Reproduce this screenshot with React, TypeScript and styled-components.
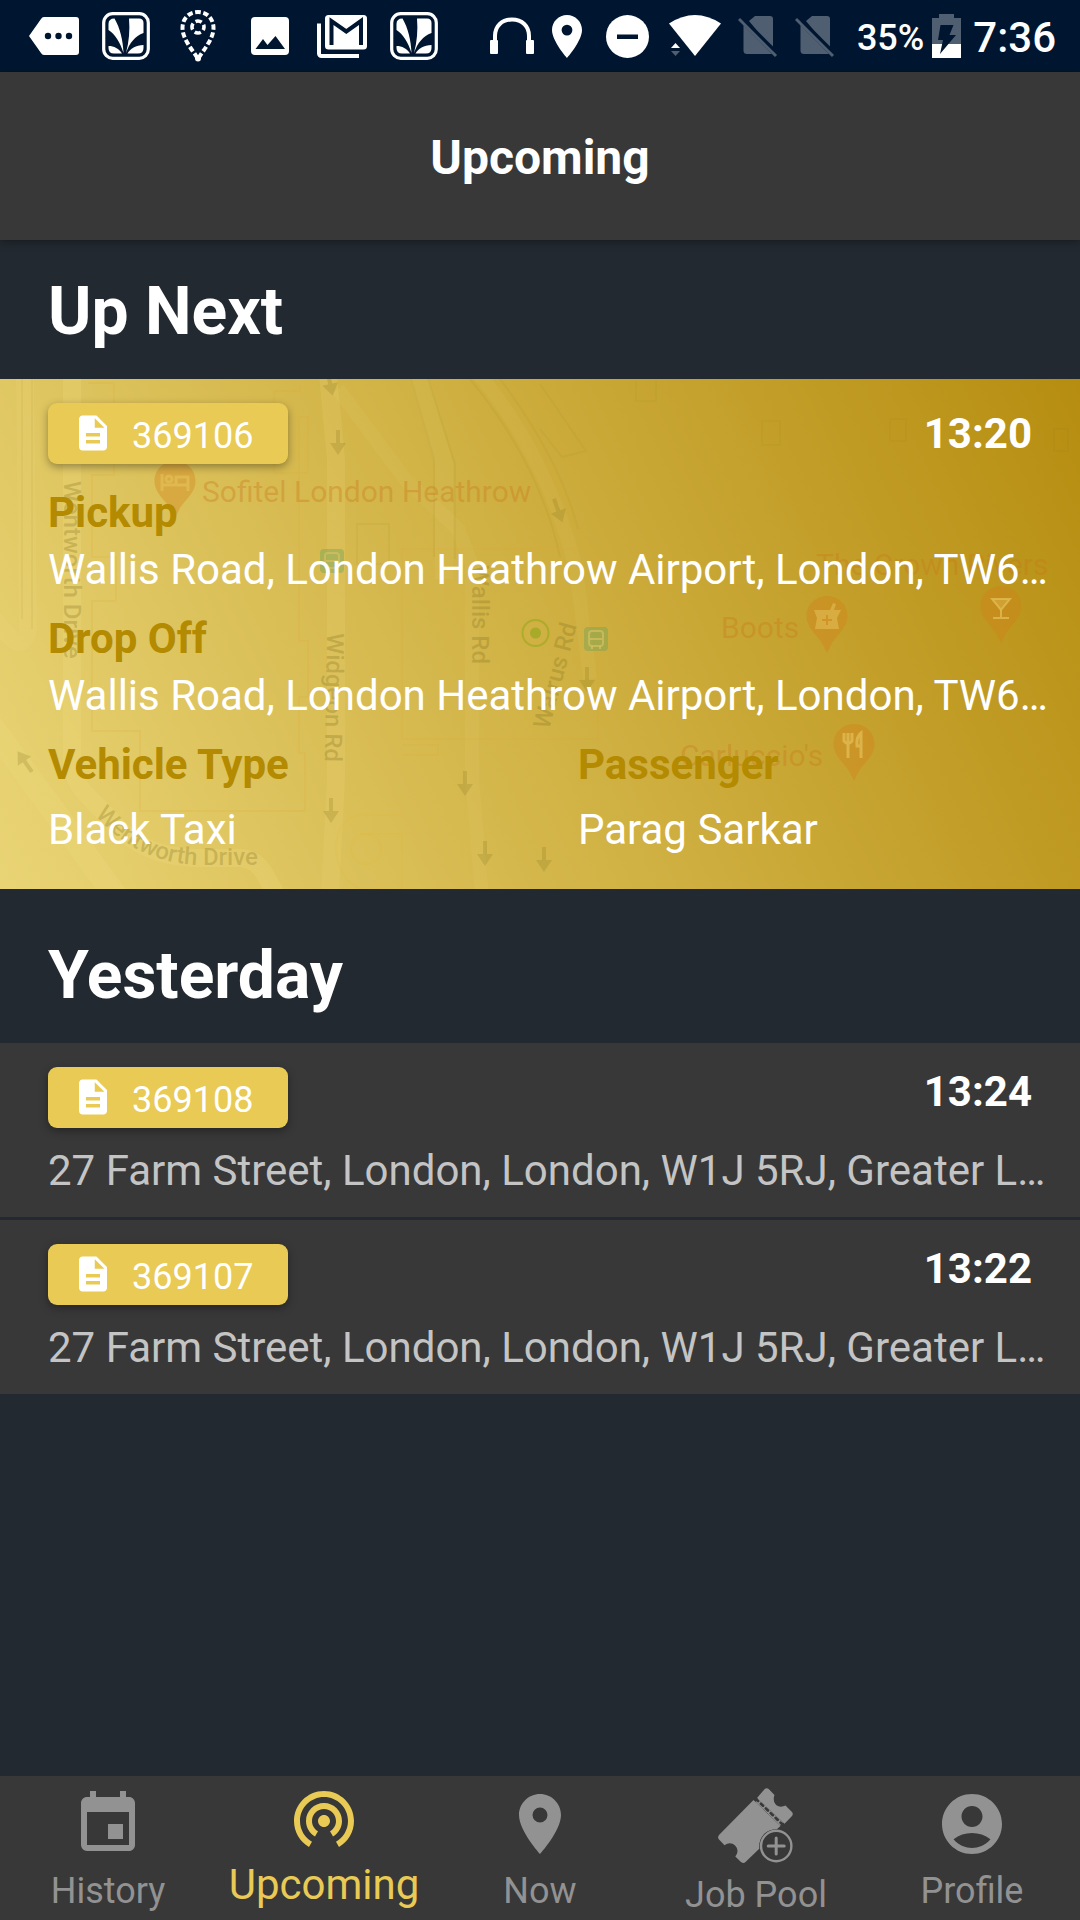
import React from 'react';
import styled, { createGlobalStyle } from 'styled-components';
import {
  MdAccountCircle,
  MdDescription,
  MdEvent,
  MdPlace,
  MdWifiTethering,
} from 'react-icons/md';

const color = {
  status: '#001630',
  page: '#222930',
  panel: '#383838',
  accent: '#e8ca54',
  label: '#b38a00',
  muted: '#c4c4c4',
  tab: '#929292',
  dim: '#4f5e70',
};

const GlobalStyle = createGlobalStyle`
  *, *::before, *::after { box-sizing: border-box; }
  body {
    margin: 0;
    background: ${color.page};
    color: #fff;
    font-family: Roboto, "Noto Sans", sans-serif;
  }
  h1, h2, p, dl, dt, dd, ul { margin: 0; padding: 0; }
  button { font: inherit; border: 0; cursor: pointer; }
`;

const Screen = styled.div`
  display: flex;
  flex-direction: column;
  min-height: 100vh;
  background: ${color.page};
`;

/* ---------- status bar ---------- */

const StatusBar = styled.div`
  display: flex;
  justify-content: space-between;
  align-items: center;
  height: 72px;
  padding: 0 24px 0 18px;
  background: ${color.status};
`;

const StatusGroup = styled.div`
  display: flex;
  align-items: center;
`;

const StatusCell = styled.span<{ $width: number }>`
  display: flex;
  justify-content: center;
  align-items: center;
  width: ${(p) => p.$width}px;
  height: 72px;

  svg { display: block; flex: none; }
`;

const BatteryText = styled.span`
  padding-top: 4px;
  margin-left: 15px;
  font-size: 36px;
  line-height: 42px;
  font-weight: 500;
`;

const Clock = styled.span`
  padding-top: 4px;
  margin-left: 4px;
  font-size: 42px;
  line-height: 48px;
  font-weight: 500;
`;

/* ---------- header and lists ---------- */

const Header = styled.header`
  position: relative;
  display: flex;
  justify-content: center;
  align-items: center;
  height: 168px;
  padding-top: 4px;
  background: ${color.panel};
  box-shadow: 0 2px 8px rgba(0, 0, 0, 0.35);
`;

const Title = styled.h1`
  font-size: 48px;
  line-height: 56px;
  font-weight: 700;
`;

const Main = styled.main`
  flex: 1;
`;

const SectionTitle = styled.h2<{ $top: number }>`
  padding: ${(p) => p.$top}px 48px 28px;
  font-size: 66px;
  line-height: 78px;
  font-weight: 700;
`;

const Card = styled.article`
  position: relative;
  padding: 24px 24px 35px 48px;
  overflow: hidden;
  background: linear-gradient(65deg, #e9d475 0%, #b68d10 100%);
`;

const MapLayer = styled.svg`
  position: absolute;
  inset: 0;
  width: 100%;
  height: 100%;
`;

const CardBody = styled.div`
  position: relative;
  display: flex;
  flex-direction: column;
  gap: 20px;
`;

const TopRow = styled.div<{ $align: string; $gap: number }>`
  display: flex;
  justify-content: space-between;
  align-items: ${(p) => p.$align};
  padding-right: 24px;
  margin-bottom: ${(p) => p.$gap}px;
`;

const JobButton = styled.button`
  display: flex;
  align-items: flex-start;
  gap: 18px;
  min-width: 240px;
  padding: 9px 24px 4px;
  border-radius: 9px;
  background: ${color.accent};
  color: #fff;
  box-shadow: 0 3px 8px rgba(0, 0, 0, 0.35);
`;

const JobNumber = styled.span`
  font-size: 36px;
  line-height: 48px;
`;

const Time = styled.time`
  font-size: 42px;
  line-height: 49px;
  font-weight: 700;
`;

const Fields = styled.dl`
  display: flex;
  flex-direction: column;
  gap: 20px;
`;

const FieldPair = styled.div`
  display: grid;
  grid-template-columns: 1fr 1fr;
  gap: 52px;
`;

const FieldBox = styled.div<{ $gap: number }>`
  display: flex;
  flex-direction: column;
  gap: ${(p) => p.$gap}px;
  min-width: 0;
`;

const Label = styled.dt`
  color: ${color.label};
  font-size: 42px;
  line-height: 49px;
  font-weight: 700;
`;

const Value = styled.dd`
  overflow: hidden;
  white-space: nowrap;
  font-size: 42px;
  line-height: 49px;
`;

const JobList = styled.ul`
  display: flex;
  flex-direction: column;
  gap: 3px;
  list-style: none;
`;

const JobItem = styled.li`
  padding: 24px 24px 22px 48px;
  background: ${color.panel};
`;

const Address = styled.p`
  overflow: hidden;
  white-space: nowrap;
  color: ${color.muted};
  font-size: 42px;
  line-height: 49px;
`;

/* ---------- tab bar ---------- */

const TabBar = styled.nav`
  display: grid;
  grid-template-columns: repeat(5, 1fr);
  height: 144px;
  background: ${color.panel};
`;

const Tab = styled.button<{ $active: boolean }>`
  display: flex;
  flex-direction: column;
  justify-content: flex-start;
  align-items: center;
  gap: 10px;
  padding: ${(p) => (p.$active ? 6 : 12)}px 0 0;
  background: none;
  color: ${(p) => (p.$active ? color.accent : color.tab)};

  svg { display: block; flex: none; }
`;

const TabLabel = styled.span<{ $active: boolean }>`
  font-size: ${(p) => (p.$active ? 42 : 36)}px;
  line-height: 42px;
`;

/* ---------- icons ---------- */

const MoreTagIcon = () => (
  <svg width="50" height="38" viewBox="0 0 50 38" aria-hidden="true">
    <path fill="#fff" d="M15 0H47a3 3 0 0 1 3 3V35a3 3 0 0 1-3 3H15q-2 0-3-2L0 19 12 2q1-2 3-2z" />
    <g fill={color.status}>
      <circle cx="19" cy="19" r="3.2" />
      <circle cx="29.5" cy="19" r="3.2" />
      <circle cx="40" cy="19" r="3.2" />
    </g>
  </svg>
);

const LeafAppIcon = () => (
  <svg width="48" height="48" viewBox="0 0 48 48" aria-hidden="true">
    <rect x="1.700" y="1.700" width="44.600" height="44.600" rx="9" fill="none" stroke="#fff" strokeWidth="3.200" />
    <g fill="#fff">
      <path d="M12.500 6.500Q6.500 6.500 6.500 12V18C13 22 18 30 21.500 41C21 28 18 16 12.500 6.500z" />
      <path d="M27 6.500H37Q41.500 6.500 41.500 11V21C33 24 27.500 31 24 41C27 30 28 18 27 6.500z" />
      <path d="M6.500 36V34C12 34 17 36.500 20 41.500H12Q6.500 41.500 6.500 36z" />
      <path d="M41.500 36V33C34 33.500 28 36.500 25.500 41.500H36Q41.500 41.500 41.500 36z" />
    </g>
  </svg>
);

const DottedPinIcon = () => (
  <svg width="36" height="52" viewBox="0 0 36 52" aria-hidden="true">
    <path
      d="M18 2C8 2 2.500 9.500 2.500 18C2.500 29 12 39 18 49C24 39 33.500 29 33.500 18C33.500 9.500 28 2 18 2z"
      fill="none"
      stroke="#fff"
      strokeWidth="4"
      strokeDasharray="5.400 2.600"
      strokeDashoffset="2.700"
    />
    <circle cx="18" cy="17" r="6" fill="none" stroke="#fff" strokeWidth="3.600" strokeDasharray="6.400 3" strokeDashoffset="3.200" />
    <circle cx="18" cy="48.500" r="3" fill="#fff" />
  </svg>
);

const ImageIcon = () => (
  <svg width="38" height="38" viewBox="0 0 38 38" aria-hidden="true">
    <rect width="38" height="38" rx="4" fill="#fff" />
    <path d="M4.500 32L12 22L16.500 28L24.500 19L34 32z" fill={color.status} />
  </svg>
);

const MailStackIcon = () => (
  <svg width="50" height="43" viewBox="0 0 50 43" aria-hidden="true">
    <path d="M2 8.500V38.500a2.500 2.500 0 0 0 2.500 2.500H42" fill="none" stroke="#fff" strokeWidth="4" />
    <rect x="8" y="0" width="42" height="34.500" rx="3.500" fill="#fff" />
    <path d="M14.500 30V6L29.300 16.500L44 6V30" fill="none" stroke={color.status} strokeWidth="4" />
  </svg>
);

const HeadphonesIcon = () => (
  <svg width="46" height="38" viewBox="0 0 46 38" aria-hidden="true">
    <path d="M6 27V19C6 9 13 2.500 23 2.500S40 9 40 19V27" fill="none" stroke="#fff" strokeWidth="4" />
    <rect x="1" y="23" width="8" height="14" rx="1" fill="#fff" />
    <rect x="37" y="23" width="8" height="14" rx="1" fill="#fff" />
  </svg>
);

const LocationIcon = () => (
  <svg width="30" height="43" viewBox="0 0 30 43" aria-hidden="true">
    <path
      fill="#fff"
      fillRule="evenodd"
      d="M15 0C6.700 0 0 6.700 0 15C0 26 15 43 15 43S30 26 30 15C30 6.700 23.300 0 15 0zM15 20.500a5.400 5.400 0 1 1 0-10.800a5.400 5.400 0 0 1 0 10.800z"
    />
  </svg>
);

const DoNotDisturbIcon = () => (
  <svg width="43" height="43" viewBox="0 0 43 43" aria-hidden="true">
    <circle cx="21.500" cy="21.500" r="21.500" fill="#fff" />
    <rect x="11" y="19.500" width="21" height="4.500" fill={color.status} />
  </svg>
);

const WifiIcon = () => (
  <svg width="52" height="42" viewBox="0 0 52 42" aria-hidden="true">
    <path d="M0 8.500Q26-8.500 52 8.500L26 41z" fill="#fff" />
    <path d="M2 33L6.500 28L11 33z" fill="#fff" />
    <path d="M2 36L6.500 41L11 36z" fill={color.dim} />
  </svg>
);

const NoSimIcon = () => (
  <svg width="40" height="43" viewBox="0 0 40 43" aria-hidden="true">
    <path d="M11 6L17 1H32a3 3 0 0 1 3 3V35z" fill={color.dim} />
    <path d="M5.500 10L34 39H9a3.500 3.500 0 0 1-3.500-3.500z" fill={color.dim} />
    <path d="M1 4L38 41" stroke={color.dim} strokeWidth="3" />
    <path d="M7.500 6L36 34.500" stroke={color.status} strokeWidth="3" />
  </svg>
);

const BatteryIcon = () => (
  <svg width="29" height="44" viewBox="0 0 29 44" aria-hidden="true">
    <path d="M7 0H22V4H29V30H0V4H7z" fill={color.dim} />
    <path d="M0 30H29V44H0z" fill="#fff" />
    <path d="M8.500 11H21.500L17.500 21H24L8 40L11 26H6z" fill={color.status} />
  </svg>
);

const TicketPlusIcon = () => (
  <svg width="76" height="76" viewBox="0 0 76 76" aria-hidden="true">
    <g fill="currentColor">
      <path d="M46.500 1.200Q48.600-.5 50.700 1L56.500 7C54.500 12 56.500 17 60.500 18.300C63 19 65.500 18.500 67.500 17.500L74 24Q75.500 26 74 28L66.500 35.800L39 10z" />
      <path d="M35.500 12L1 47Q-.8 49.500 1 51.500L6.500 57.300C10 54.500 14 54.500 17 57.500C20 60.500 20.500 64.500 17.300 68.500L23 74Q25.500 75.800 27.500 74L41.500 60.500C40.500 50 47 41.500 58.500 41.500L62.500 38z" />
    </g>
    <path d="M39 12.500L63.500 36" stroke="currentColor" strokeWidth="4" />
    <path d="M38 11L65.500 37.500" stroke={color.panel} strokeWidth="2.600" strokeDasharray="3 3.800" strokeLinecap="round" />
    <circle cx="58.200" cy="58" r="16.800" fill={color.panel} />
    <circle cx="58.200" cy="58" r="15.200" fill="none" stroke="currentColor" strokeWidth="2.400" />
    <path d="M58.200 50V66M50.200 58H66.200" stroke="currentColor" strokeWidth="3" strokeLinecap="round" />
  </svg>
);

/* ---------- map backdrop ---------- */

type Point = { x: number; y: number };

const PoiPin = ({ x, y, children }: Point & { children: React.ReactNode }) => (
  <g transform={`translate(${x} ${y})`}>
    <path
      d="M0-21C-12-21-20.500-12-20.500-1C-20.500 12-8 19-3.500 29L0 36L3.500 29C8 19 20.500 12 20.500-1C20.500-12 12-21 0-21z"
      fill="#d1801a"
      fillOpacity="0.38"
    />
    <g fill="none" stroke="#e2bd55" strokeOpacity="0.75" strokeWidth="3">
      {children}
    </g>
  </g>
);

const RoadArrow = ({ x, y, turn = 0 }: Point & { turn?: number }) => (
  <path
    transform={`translate(${x} ${y}) rotate(${turn})`}
    d="M-2-12H2V1H8L0 13L-8 1H-2z"
    fill="#8a7a20"
    fillOpacity="0.24"
  />
);

const BusStop = ({ x, y }: Point) => (
  <g transform={`translate(${x} ${y})`}>
    <rect width="24" height="24" rx="4" fill="#6aa35a" fillOpacity="0.4" />
    <rect x="5" y="4" width="14" height="15" rx="3" fill="none" stroke="#d6c060" strokeOpacity="0.7" strokeWidth="2" />
    <path d="M6 12H18M8 19V22M16 19V22" stroke="#d6c060" strokeOpacity="0.7" strokeWidth="2" />
  </g>
);

const MapBackdrop = () => (
  <MapLayer viewBox="0 0 1080 510" preserveAspectRatio="xMinYMin slice" aria-hidden="true">
    <g fill="none" stroke="#f0dc80" strokeOpacity="0.16" strokeLinejoin="round">
      <path strokeWidth="18" strokeOpacity="0.25" d="M72 0V385Q73 400 84 413L122 452Q148 477 195 479H240Q256 480 264 494L276 515" />
      <path strokeWidth="24" strokeOpacity="0.25" d="M-10 345L118 520" />
      <path strokeWidth="18" d="M25 0L28 250Q24 272 10 258L-6 240" />
      <path strokeWidth="18" d="M328-4L336 80V400L330 515" />
      <path strokeWidth="14" strokeOpacity="0.1" d="M338 10L405 100L458 150L472 186V400L482 515" />
      <path strokeWidth="18" strokeOpacity="0.1" d="M418-4L444 85V200" />
      <path strokeWidth="14" strokeOpacity="0.08" d="M480-4Q548 80 576 190L590 300" />
    </g>
    <g fill="none" stroke="#8f7a1c" strokeOpacity="0.08" strokeWidth="2">
      <path d="M411 0L434 80V178M428 0L455 85V180" />
      <path d="M470 0Q540 85 560 178M500 0Q560 80 578 150" />
      <path d="M540 5L586 72L562 78L540 50" />
      <path d="M636 2V22H656V2M762 42h18v24h-18zM890 40h16v22h-16zM1054 50h14v22h-14z" />
      <path d="M357 145h32v40h-32z" />
      <path d="M22 0V240M32 0V250" />
    </g>
    <g fill="none" stroke="#e0a830" strokeOpacity="0.16" strokeWidth="2">
      <path d="M88 4H114V96H92V178H116V222H92V352H140V432H305V374H299V318H308V262H299V38H308V94H274V12H300V4" />
      <path d="M402 170H598V360H402zM402 366H438V376H402M665 205V460" />
    </g>
    <g fill="none" stroke="#e3b840" strokeOpacity="0.24" strokeWidth="2">
      <path d="M402 436H360Q336 440 336 470Q338 500 360 510H402V455H360" />
      <circle cx="366" cy="470" r="15" />
    </g>

    <RoadArrow x={330} y={4} turn={-12} />
    <RoadArrow x={338} y={63} />
    <RoadArrow x={558} y={131} turn={-20} />
    <RoadArrow x={25} y={383} turn={145} />
    <RoadArrow x={331} y={431} />
    <RoadArrow x={465} y={404} />
    <RoadArrow x={485} y={474} />
    <RoadArrow x={544} y={480} />
    <RoadArrow x={587} y={300} />

    <g fill="#7f7020" fillOpacity="0.28" fontFamily="Roboto, sans-serif" fontSize="24" fontWeight="500">
      <text transform="translate(64 102) rotate(90)">Wentworth Drive</text>
      <text transform="translate(327 254) rotate(91)">Widgeon Rd</text>
      <text transform="translate(472 186) rotate(90)">Wallis Rd</text>
      <text transform="translate(549 351) rotate(-75)">Walrus Rd</text>
      <path id="wentworth-curve" d="M95 436C125 470 160 486 204 486H280" fill="none" />
      <text>
        <textPath href="#wentworth-curve">Wentworth Drive</textPath>
      </text>
    </g>
    <g fill="#c97a1a" fillOpacity="0.38" fontFamily="Roboto, sans-serif" fontSize="30">
      <text x="202" y="123">Sofitel London Heathrow</text>
      <text x="721" y="259">Boots</text>
      <text x="816" y="196">The Crown Rivers</text>
      <text x="680" y="387">Carluccio's</text>
    </g>

    <PoiPin x={175} y={103}>
      <path d="M-13-8V9M-13 3H13M13 9V-5H1V3" />
      <circle cx="-6" cy="-3" r="3" />
    </PoiPin>
    <PoiPin x={827} y={238}>
      <path fill="#e2bd55" fillOpacity="0.6" stroke="none" d="M-13-7H3L6-14L9-13L7-7H14L10 1L12 12H-12L-10 1z" />
      <path stroke="#cf8c20" strokeWidth="2" d="M-5 3H5M0-2V8" />
    </PoiPin>
    <PoiPin x={1001} y={228}>
      <path fill="#e2bd55" fillOpacity="0.4" strokeWidth="2" d="M-9-8H9L0 3z" />
      <path strokeWidth="2" d="M0 3V11M-8 11H8" />
    </PoiPin>
    <PoiPin x={854} y={366}>
      <path d="M-10-12V-4Q-6 1-2-4V-12M-6-12V13M7 13V-12Q2-8 3 1H7" />
    </PoiPin>
    <BusStop x={320} y={170} />
    <BusStop x={584} y={248} />
    <circle cx="535.500" cy="254" r="13" fill="none" stroke="#96a81c" strokeOpacity="0.6" strokeWidth="2" />
    <circle cx="535.500" cy="254" r="5.500" fill="#96a81c" fillOpacity="0.7" />
  </MapLayer>
);

/* ---------- pieces ---------- */

const JobChip = ({ id }: { id: string }) => (
  <JobButton type="button">
    <MdDescription size={42} aria-hidden="true" />
    <JobNumber>{id}</JobNumber>
  </JobButton>
);

const Field = ({ label, value, gap = 8 }: { label: string; value: string; gap?: number }) => (
  <FieldBox $gap={gap}>
    <Label>{label}</Label>
    <Value>{value}</Value>
  </FieldBox>
);

const yesterday = [
  { id: '369108', time: '13:24', address: '27 Farm Street, London, London, W1J 5RJ, Greater L…' },
  { id: '369107', time: '13:22', address: '27 Farm Street, London, London, W1J 5RJ, Greater L…' },
];

const tabs = [
  { label: 'History', icon: <MdEvent size={72} /> },
  { label: 'Upcoming', icon: <MdWifiTethering size={72} />, active: true },
  { label: 'Now', icon: <MdPlace size={72} /> },
  { label: 'Job Pool', icon: <TicketPlusIcon /> },
  { label: 'Profile', icon: <MdAccountCircle size={72} /> },
];

const notifications = [MoreTagIcon, LeafAppIcon, DottedPinIcon, ImageIcon, MailStackIcon, LeafAppIcon];

const indicators = [
  { Icon: HeadphonesIcon, width: 56 },
  { Icon: LocationIcon, width: 54 },
  { Icon: DoNotDisturbIcon, width: 68 },
  { Icon: WifiIcon, width: 66 },
  { Icon: NoSimIcon, width: 60 },
  { Icon: NoSimIcon, width: 54 },
];

export default function App() {
  return (
    <Screen>
      <GlobalStyle />
      <StatusBar>
        <StatusGroup>
          {notifications.map((Icon, i) => (
            <StatusCell key={i} $width={72}>
              <Icon />
            </StatusCell>
          ))}
        </StatusGroup>
        <StatusGroup>
          {indicators.map(({ Icon, width }, i) => (
            <StatusCell key={i} $width={width}>
              <Icon />
            </StatusCell>
          ))}
          <BatteryText>35%</BatteryText>
          <StatusCell $width={45}>
            <BatteryIcon />
          </StatusCell>
          <Clock>7:36</Clock>
        </StatusGroup>
      </StatusBar>

      <Header>
        <Title>Upcoming</Title>
      </Header>

      <Main>
        <section>
          <SectionTitle $top={33}>Up Next</SectionTitle>
          <Card>
            <MapBackdrop />
            <CardBody>
              <TopRow $align="center" $gap={4}>
                <JobChip id="369106" />
                <Time>13:20</Time>
              </TopRow>
              <Fields>
                <Field label="Pickup" value="Wallis Road, London Heathrow Airport, London, TW6…" />
                <Field label="Drop Off" value="Wallis Road, London Heathrow Airport, London, TW6…" />
                <FieldPair>
                  <Field label="Vehicle Type" value="Black Taxi" gap={16} />
                  <Field label="Passenger" value="Parag Sarkar" gap={16} />
                </FieldPair>
              </Fields>
            </CardBody>
          </Card>
        </section>

        <section>
          <SectionTitle $top={48}>Yesterday</SectionTitle>
          <JobList>
            {yesterday.map((job) => (
              <JobItem key={job.id}>
                <TopRow $align="flex-start" $gap={18}>
                  <JobChip id={job.id} />
                  <Time>{job.time}</Time>
                </TopRow>
                <Address>{job.address}</Address>
              </JobItem>
            ))}
          </JobList>
        </section>
      </Main>

      <TabBar>
        {tabs.map(({ label, icon, active = false }) => (
          <Tab key={label} type="button" $active={active} aria-current={active ? 'page' : undefined}>
            {icon}
            <TabLabel $active={active}>{label}</TabLabel>
          </Tab>
        ))}
      </TabBar>
    </Screen>
  );
}
